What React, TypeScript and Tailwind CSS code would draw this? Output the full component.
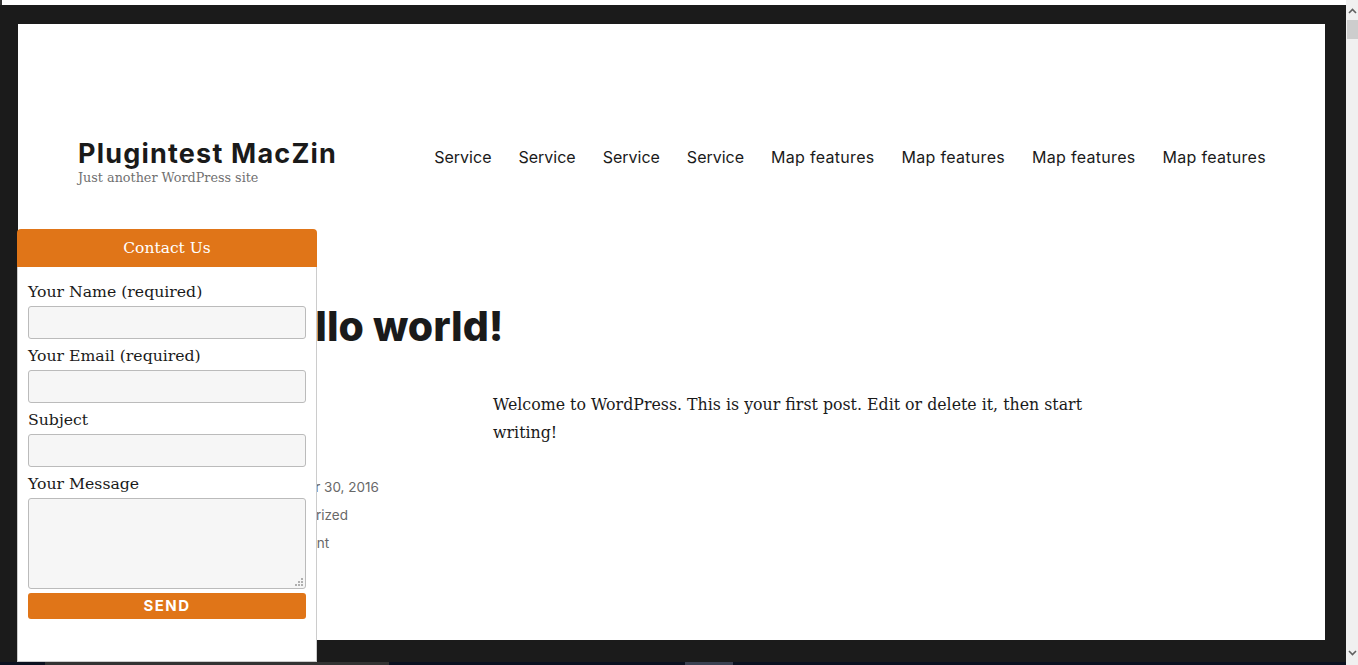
import React from "react";

const sans = "font-['Inter',_'Liberation_Sans',_sans-serif]";
const serif = "font-['DejaVu_Serif',_'Liberation_Serif',_serif]";

function Field({ label, tall }: { label: string; tall?: boolean }) {
  return (
    <div className="flex flex-col">
      <label className={`${serif} text-[15.7px] leading-[24px] text-[#1a1a1a]`}>{label}</label>
      {tall ? (
        <div className="relative mt-[2px] h-[91px] rounded-[3px] border border-[#bbbbbb] bg-[#f6f6f6]">
          <svg className="absolute right-[2px] bottom-[2px]" width="8" height="8" viewBox="0 0 8 8">
            <rect x="6" y="0" width="2" height="2" fill="#b0b0b0" />
            <rect x="3" y="3" width="2" height="2" fill="#b0b0b0" />
            <rect x="6" y="3" width="2" height="2" fill="#b0b0b0" />
            <rect x="0" y="6" width="2" height="2" fill="#b0b0b0" />
            <rect x="3" y="6" width="2" height="2" fill="#b0b0b0" />
            <rect x="6" y="6" width="2" height="2" fill="#b0b0b0" />
          </svg>
        </div>
      ) : (
        <div className="mt-[2px] mb-[5px] h-[33px] rounded-[3px] border border-[#bbbbbb] bg-[#f6f6f6]" />
      )}
    </div>
  );
}

export default function App() {
  return (
    <div className="relative flex h-[665px] w-[1358px] overflow-hidden bg-white">
      <div className="flex w-[1346px] flex-col">
        <div className="relative h-[5px] bg-white">
          <div className="absolute left-0 top-0 h-[5px] w-[2px] bg-[#333]" />
        </div>
        <div className="flex h-[657px] flex-col bg-[#1b1b1b] pl-[18px] pr-[21px] pt-[19px]">
          <div className="h-[616px] bg-white">
            {/* header */}
            <div className="flex items-start justify-between pl-[60px] pr-[59px] pt-[115px]">
              <div className="flex flex-col">
                <div className={`${sans} text-[27px] font-bold leading-[30px] tracking-[1.2px] text-[#1a1a1a]`}>Plugintest MacZin</div>
                <div className={`${serif} text-[12.75px] leading-[18px] text-[#707070]`}>Just another WordPress site</div>
              </div>
              <nav className={`${sans} mt-[6px] flex gap-[27px] text-[16px] leading-[24px] text-[#1a1a1a]`}>
                <span>Service</span>
                <span>Service</span>
                <span>Service</span>
                <span>Service</span>
                <span className="tracking-[0.3px]">Map features</span>
                <span className="tracking-[0.3px]">Map features</span>
                <span className="tracking-[0.3px]">Map features</span>
                <span className="tracking-[0.3px]">Map features</span>
              </nav>
            </div>
            {/* main */}
            <div className="pl-[242px] pt-[117px]">
              <h1 className={`${sans} text-[41px] font-extrabold leading-[44px] text-[#1a1a1a]`}>Hello world!</h1>
            </div>
            <div className="mt-[43px] flex pl-[236px]">
              <div className={`${sans} mt-[82px] flex w-[239px] flex-col text-[13.5px] leading-[28px] text-[#686868]`}>
                <span>November 30, 2016</span>
                <span>Uncategorized</span>
                <span className="pl-[4px]">1 Comment</span>
              </div>
              <p className={`${serif} w-[620px] text-[15.8px] leading-[28px] text-[#1a1a1a]`}>
                Welcome to WordPress. This is your first post. Edit or delete it, then start writing!
              </p>
            </div>
          </div>
        </div>
        <div className="flex h-[3px] bg-[#0b1120]">
          <div className="ml-[45px] w-[344px] bg-[#333333]" />
          <div className="ml-[296px] w-[48px] bg-[#3b4152]" />
        </div>
      </div>
      {/* scrollbar */}
      <div className="flex h-[665px] w-[12px] flex-col items-center bg-[#f0f0f0]">
        <svg className="mt-[8px]" width="9" height="6" viewBox="0 0 9 6">
          <path d="M1 5 L4.5 1.5 L8 5" stroke="#606060" strokeWidth="1.6" fill="none" />
        </svg>
        <div className="mt-[6px] h-[19px] w-[11px] bg-[#cdcdcd]" />
        <div className="flex-1" />
        <svg className="mb-[9px]" width="9" height="6" viewBox="0 0 9 6">
          <path d="M1 1 L4.5 4.5 L8 1" stroke="#606060" strokeWidth="1.6" fill="none" />
        </svg>
      </div>
      {/* contact panel */}
      <div className="absolute left-[17px] top-[229px] w-[300px]">
        <div className={`${serif} flex h-[38px] items-center justify-center rounded-t-[4px] bg-[#e07518] pt-[2px] text-[15.5px] text-white`}>
          Contact Us
        </div>
        <div className="h-[395px] border-x border-b border-[#cccccc] bg-white px-[10px] pt-[13px]">
          <Field label="Your Name (required)" />
          <Field label="Your Email (required)" />
          <Field label="Subject" />
          <Field label="Your Message" tall />
          <div className={`${sans} mt-[4px] flex h-[26px] items-center justify-center rounded-[3px] bg-[#e07518] text-[15px] font-bold tracking-[1.5px] text-white`}>
            SEND
          </div>
        </div>
      </div>
    </div>
  );
}
